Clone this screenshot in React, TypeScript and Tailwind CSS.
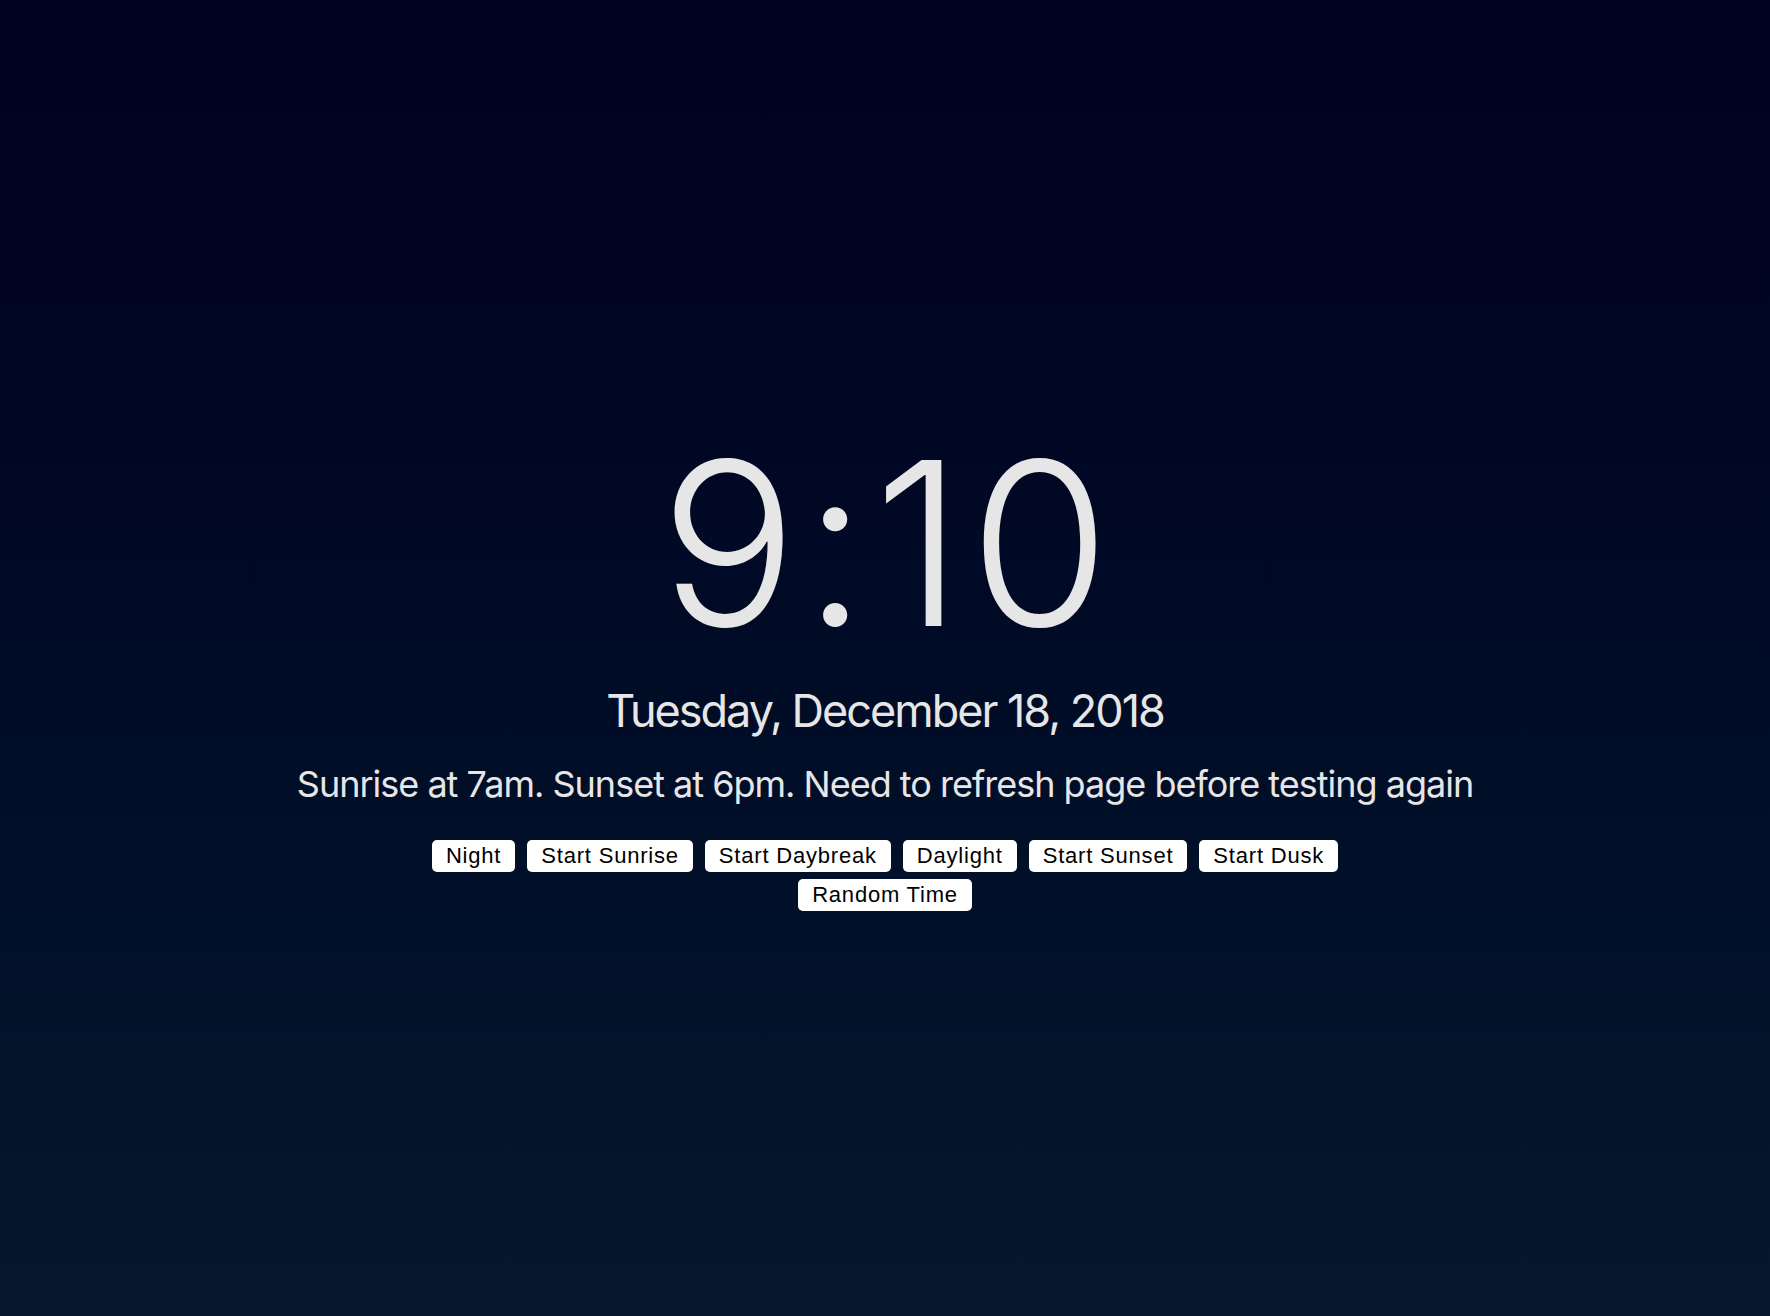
const buttons = [
  "Night",
  "Start Sunrise",
  "Start Daybreak",
  "Daylight",
  "Start Sunset",
  "Start Dusk",
  "Random Time",
];

export default function App() {
  return (
    <main className="min-h-screen bg-gradient-to-b from-[#00011f] to-[#05182d] text-[#e6e6e6] flex flex-col items-center pt-[429px] font-['Inter',sans-serif]">
      <h1 className="text-[228px] leading-none font-light tracking-[6px] -mr-[6px]">9:10</h1>
      <h2 className="mt-[31px] text-[45px] leading-none font-normal tracking-[-2px]">
        Tuesday, December 18, 2018
      </h2>
      <p className="mt-[33px] text-[36px] leading-none tracking-[-1px]">
        Sunrise at 7am. Sunset at 6pm. Need to refresh page before testing again
      </p>
      <div className="mt-[38px] w-[940px] flex flex-wrap justify-center gap-x-3 gap-y-[7px]">
        {buttons.map((label) => (
          <button
            key={label}
            className="h-8 px-[14px] bg-white text-black rounded-[5px] text-[22px] leading-none tracking-[0.8px] font-['Liberation_Sans',sans-serif]"
          >
            {label}
          </button>
        ))}
      </div>
    </main>
  );
}
